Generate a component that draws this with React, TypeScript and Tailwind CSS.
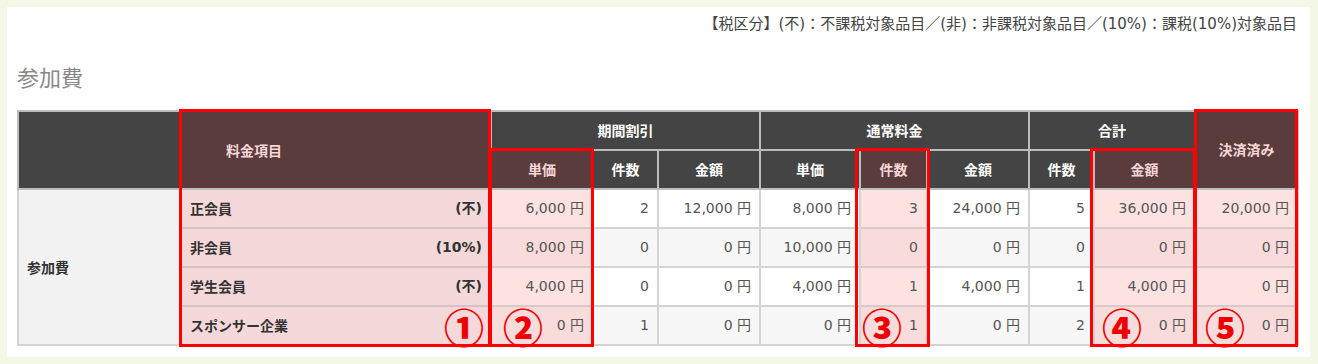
import React from "react";

type Row = {
  label: string;
  tax: string;
  vals: string[];
};

const rows: Row[] = [
  { label: "正会員", tax: "(不)", vals: ["6,000 円", "2", "12,000 円", "8,000 円", "3", "24,000 円", "5", "36,000 円", "20,000 円"] },
  { label: "非会員", tax: "(10%)", vals: ["8,000 円", "0", "0 円", "10,000 円", "0", "0 円", "0", "0 円", "0 円"] },
  { label: "学生会員", tax: "(不)", vals: ["4,000 円", "0", "0 円", "4,000 円", "1", "4,000 円", "1", "4,000 円", "0 円"] },
  { label: "スポンサー企業", tax: "", vals: ["0 円", "1", "0 円", "0 円", "1", "0 円", "2", "0 円", "0 円"] },
];

// value-column index -> highlighted
const hlVals = [0, 4, 7, 8];
// circle marks in the last row, by value-column index
const marks: Record<number, { n: string; pl: string }> = {
  0: { n: "②", pl: "pl-[11px]" },
  4: { n: "③", pl: "pl-[1px]" },
  7: { n: "④", pl: "pl-[7px]" },
  8: { n: "⑤", pl: "pl-[9px]" },
};

const cols = [
  "w-[163px]",
  "w-[310px]",
  "w-[102px]",
  "w-[65px]",
  "w-[102px]",
  "w-[100px]",
  "w-[67px]",
  "w-[102px]",
  "w-[65px]",
  "w-[101px]",
  "w-[103px]",
];

const jp = "font-['Noto_Sans_CJK_JP',sans-serif]";
const mixed = "font-['DejaVu_Sans','Noto_Sans_CJK_JP',sans-serif]";

function Mark({ n }: { n: string }) {
  return (
    <span className={`${jp} text-[40px] font-black leading-[20px] text-[#ee0000]`}>{n}</span>
  );
}

function Box({ cls }: { cls: string }) {
  return <div className={`absolute border-[3px] border-[#ff0000] pointer-events-none ${cls}`} />;
}

export default function App() {
  const thBase = `border-2 border-[#bdbdbd] font-bold text-[14px] text-center align-middle ${jp}`;
  const dark = "bg-[#444444] text-white";
  const hl = "bg-[#5a3c3d] text-[#f6d6d6]";
  return (
    <div className={`w-[1318px] h-[364px] bg-[#f3f7e6] p-[7px] ${mixed}`}>
      <div className="bg-white w-[1303px] h-[350px] pl-[10px] pt-[4px] flex flex-col">
        <div className={`w-[1280px] flex justify-end text-[15px] text-[#444] leading-[26px] ${mixed}`}>
          【税区分】(不)：不課税対象品目／(非)：非課税対象品目／(10%)：課税(10%)対象品目
        </div>
        <div className={`mt-[24px] text-[22px] text-[#888] leading-[30px] ${jp}`}>参加費</div>
        <div className="relative mt-[19px] w-[1280px]">
          <table className="table-fixed border-collapse w-[1280px]">
            <colgroup>
              {cols.map((c, i) => (
                <col key={i} className={c} />
              ))}
            </colgroup>
            <thead>
              <tr className="h-[39px]">
                <th rowSpan={2} className={`${thBase} ${dark}`}></th>
                <th rowSpan={2} className={`${thBase} ${hl} text-left pl-[44px]`}>料金項目</th>
                <th colSpan={3} className={`${thBase} ${dark}`}>期間割引</th>
                <th colSpan={3} className={`${thBase} ${dark}`}>通常料金</th>
                <th colSpan={2} className={`${thBase} ${dark}`}>合計</th>
                <th rowSpan={2} className={`${thBase} ${hl} pb-[2px]`}>決済済み</th>
              </tr>
              <tr className="h-[39px]">
                {["単価", "件数", "金額", "単価", "件数", "金額", "件数", "金額"].map((t, i) => (
                  <th key={i} className={`${thBase} ${hlVals.includes(i) ? hl : dark}`}>
                    {t}
                  </th>
                ))}
              </tr>
            </thead>
            <tbody>
              {rows.map((r, ri) => {
                const even = ri % 2 === 1;
                const last = ri === rows.length - 1;
                return (
                  <tr key={ri} className="h-[39px]">
                    {ri === 0 && (
                      <td
                        rowSpan={4}
                        className={`border-2 border-[#d4d4d4] bg-[#f2f2f2] text-[14px] font-bold text-[#333] pl-[8px] align-middle ${jp}`}
                      >
                        参加費
                      </td>
                    )}
                    <td className="border-2 border-[#d6c2c3] bg-[#f5d8d9] pl-[8px] pr-[6px] text-[14px] font-bold text-[#333] align-middle">
                      <div className="flex justify-between items-center">
                        <span className={jp}>{r.label}</span>
                        {last ? <Mark n="①" /> : <span className="pr-[2px]">{r.tax}</span>}
                      </div>
                    </td>
                    {r.vals.map((v, vi) => {
                      const isHl = hlVals.includes(vi);
                      const bg = isHl
                        ? even
                          ? "bg-[#f8dcdc] border-[#dcc8c8]"
                          : "bg-[#fde2e2] border-[#dcc8c8]"
                        : even
                        ? "bg-[#f7f7f7] border-[#d4d4d4]"
                        : "bg-white border-[#d4d4d4]";
                      const mark = last ? marks[vi] : undefined;
                      return (
                        <td key={vi} className={`border-2 ${bg} pr-[8px] text-[14px] text-[#555] align-middle`}>
                          {mark ? (
                            <div className={`flex justify-between items-center ${mark.pl}`}>
                              <Mark n={mark.n} />
                              <span>{v}</span>
                            </div>
                          ) : (
                            <div className="text-right">{v}</div>
                          )}
                        </td>
                      );
                    })}
                  </tr>
                );
              })}
            </tbody>
          </table>
          {/* annotation frames drawn over the table */}
          <Box cls="left-[162px] top-[-1px] w-[312px] h-[238px]" />
          <Box cls="left-[472px] top-[38px] w-[105px] h-[199px]" />
          <Box cls="left-[838px] top-[38px] w-[75px] h-[199px]" />
          <Box cls="left-[1073px] top-[38px] w-[106px] h-[199px]" />
          <Box cls="left-[1177px] top-[-1px] w-[104px] h-[238px]" />
        </div>
      </div>
    </div>
  );
}
